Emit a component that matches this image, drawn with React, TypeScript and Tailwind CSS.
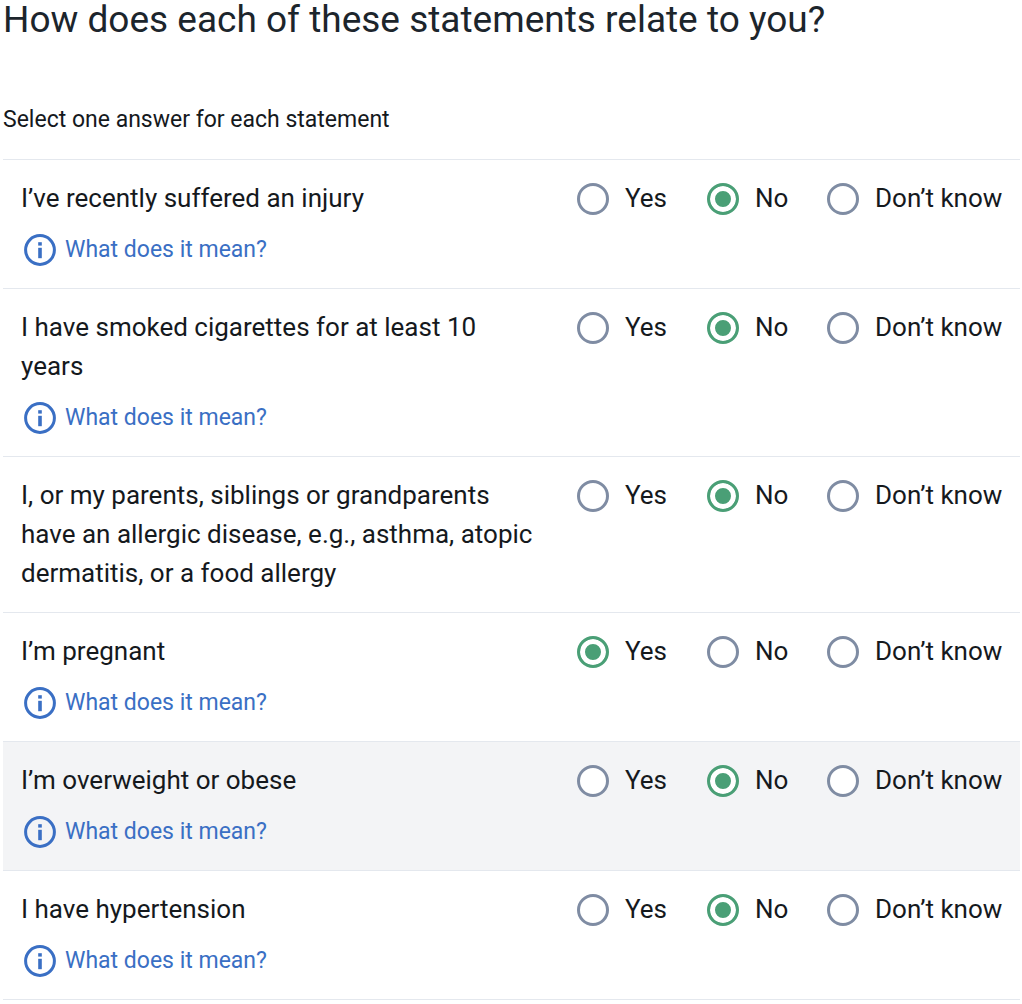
import { useState } from "react"

type Answer = "yes" | "no" | "unknown"

interface Statement {
  id: string
  text: string
  answer: Answer
  hasHelp: boolean
  highlighted?: boolean
}

const options: { value: Answer; label: string }[] = [
  { value: "yes", label: "Yes" },
  { value: "no", label: "No" },
  { value: "unknown", label: "Don’t know" },
]

const statements: Statement[] = [
  { id: "injury", text: "I’ve recently suffered an injury", answer: "no", hasHelp: true },
  { id: "smoking", text: "I have smoked cigarettes for at least 10 years", answer: "no", hasHelp: true },
  {
    id: "allergy",
    text: "I, or my parents, siblings or grandparents have an allergic disease, e.g., asthma, atopic dermatitis, or a food allergy",
    answer: "no",
    hasHelp: false,
  },
  { id: "pregnant", text: "I’m pregnant", answer: "yes", hasHelp: true },
  { id: "overweight", text: "I’m overweight or obese", answer: "no", hasHelp: true, highlighted: true },
  { id: "hypertension", text: "I have hypertension", answer: "no", hasHelp: true },
]

function InfoIcon() {
  return (
    <svg className="size-8 shrink-0" viewBox="0 0 32 32" fill="none" aria-hidden="true">
      <circle cx="16" cy="16" r="14.4" stroke="currentColor" strokeWidth="3" />
      <rect x="14.2" y="8.2" width="3.6" height="3.4" fill="currentColor" />
      <rect x="14.2" y="13.8" width="3.6" height="10.4" fill="currentColor" />
    </svg>
  )
}

function StatementRow({ statement }: { statement: Statement }) {
  const [answer, setAnswer] = useState<Answer>(statement.answer)

  return (
    <div
      role="radiogroup"
      aria-labelledby={statement.id}
      className={`grid grid-cols-[1fr_130px_120px_173px] border-t border-[#e4e8ee] py-[19px] pr-5 pl-[18px] ${
        statement.highlighted ? "bg-[#f3f4f6]" : ""
      }`}
    >
      <div className="pr-9">
        <p id={statement.id}>{statement.text}</p>
        {statement.hasHelp && (
          <button type="button" className="mt-3 ml-[3px] flex h-[39px] items-center gap-[9px] text-[23px] text-[#3a6fc4]">
            <InfoIcon />
            What does it mean?
          </button>
        )}
      </div>
      {options.map((option) => (
        <label key={option.value} className="flex h-[39px] items-center gap-4 whitespace-nowrap">
          <input
            type="radio"
            name={statement.id}
            value={option.value}
            checked={answer === option.value}
            onChange={() => setAnswer(option.value)}
            className="size-8 shrink-0 appearance-none rounded-full border-3 border-[#7f8ca3] bg-white checked:border-[#4a9f76] checked:bg-[#4a9f76] checked:shadow-[inset_0_0_0_5px_white]"
          />
          {option.label}
        </label>
      ))}
    </div>
  )
}

export default function App() {
  return (
    <main className="bg-white pr-0.5 pl-[3px] font-['Roboto',sans-serif] text-[26px] leading-[39px] text-[#15191d]">
      <h1 className="text-[37px] text-[#1c252c]">How does each of these statements relate to you?</h1>
      <p className="mt-[61px] mb-5 text-[23px]">Select one answer for each statement</p>
      <form className="border-b border-[#e4e8ee]">
        {statements.map((statement) => (
          <StatementRow key={statement.id} statement={statement} />
        ))}
      </form>
    </main>
  )
}
